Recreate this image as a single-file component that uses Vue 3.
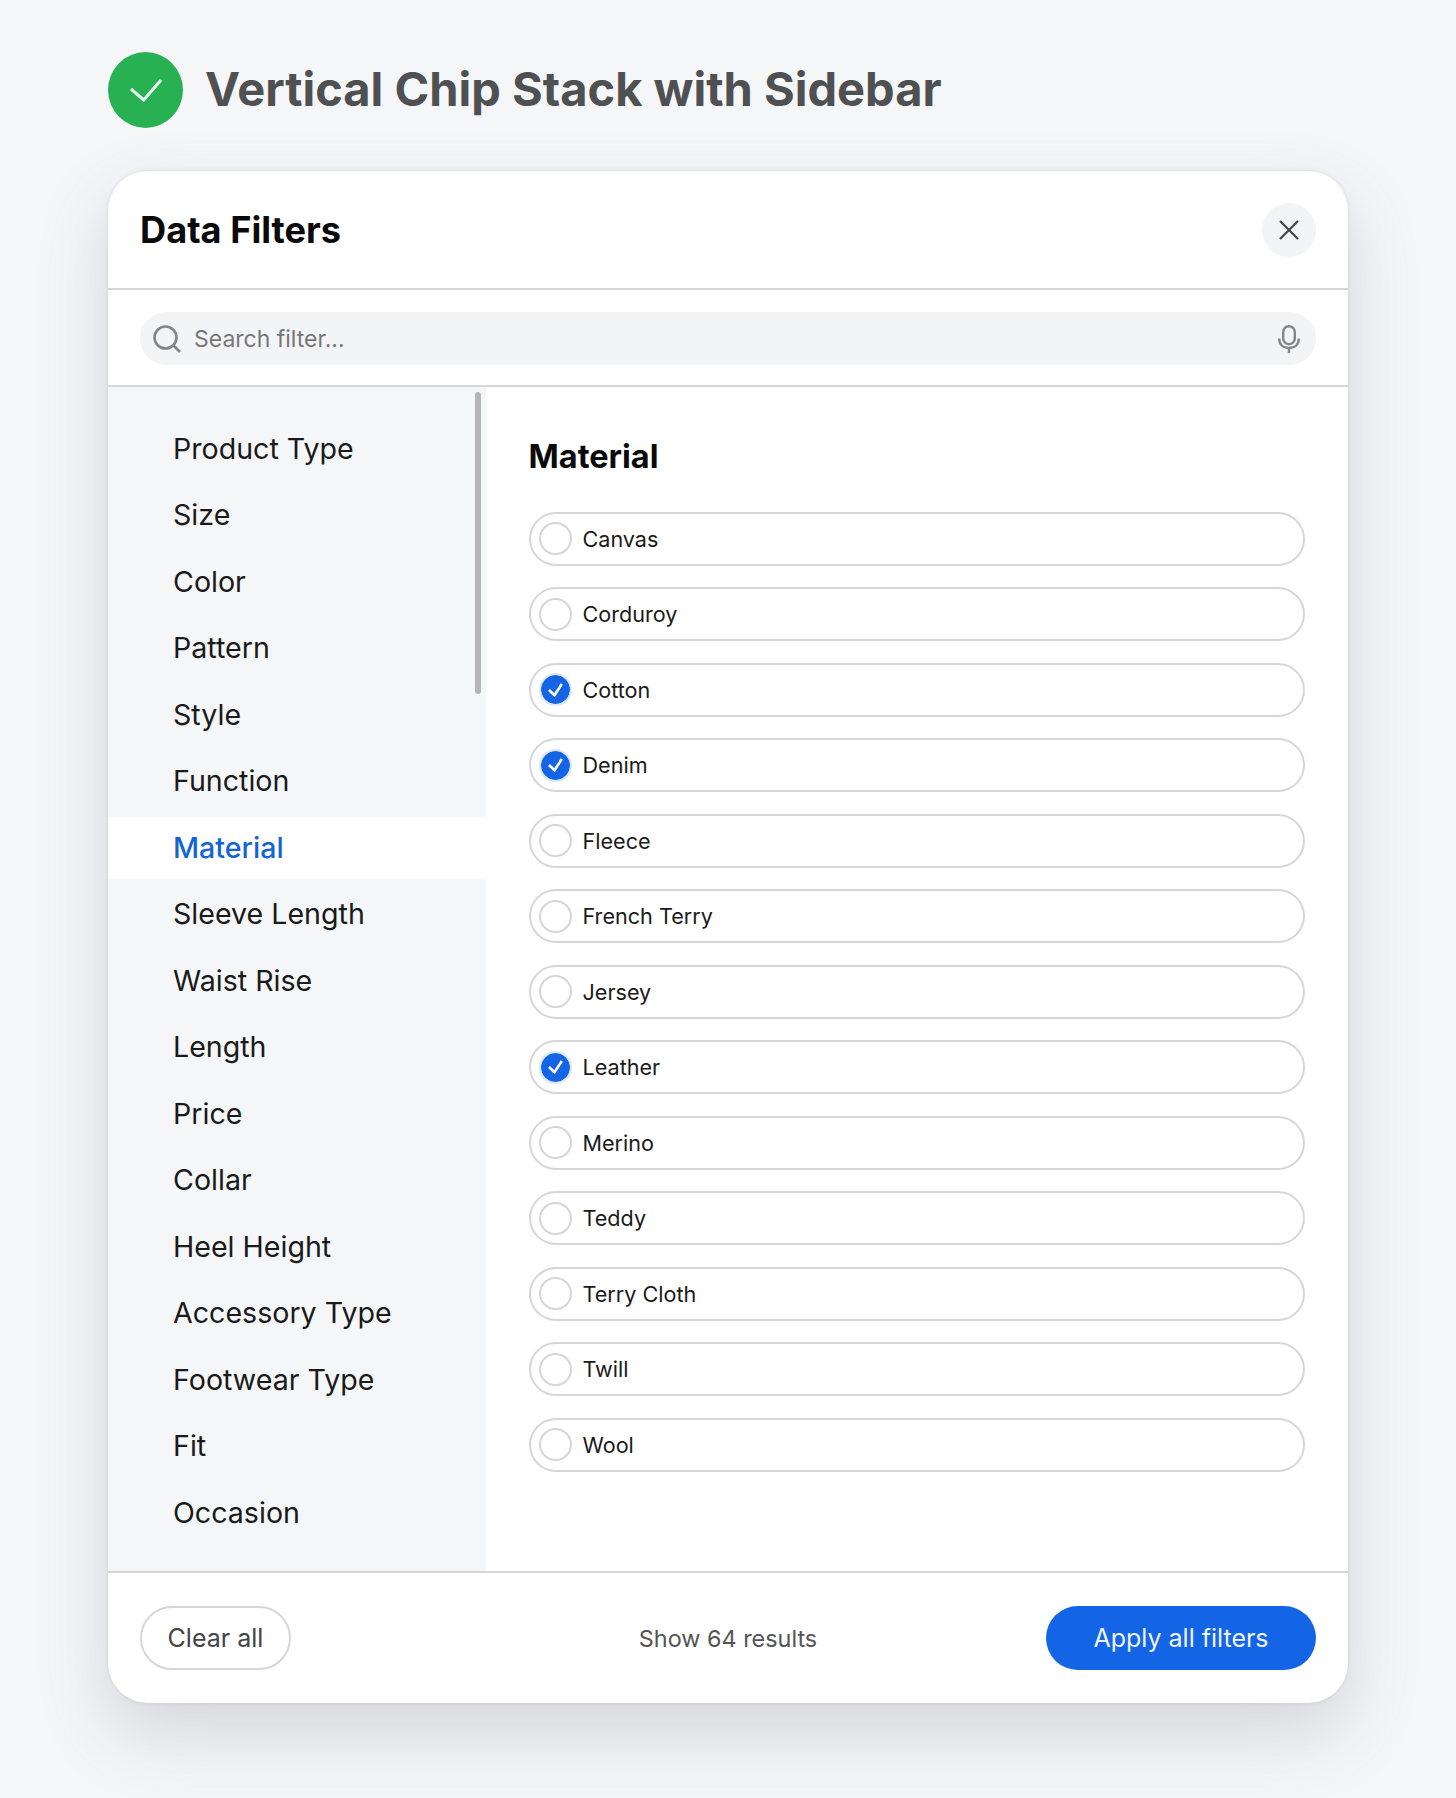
<script setup>
const categories = [
	'Product Type', 'Size', 'Color', 'Pattern', 'Style', 'Function', 'Material', 'Sleeve Length', 'Waist Rise',
	'Length', 'Price', 'Collar', 'Heel Height', 'Accessory Type', 'Footwear Type', 'Fit', 'Occasion'
];

const materials = [
	{ name: 'Canvas', checked: false },
	{ name: 'Corduroy', checked: false },
	{ name: 'Cotton', checked: true },
	{ name: 'Denim', checked: true },
	{ name: 'Fleece', checked: false },
	{ name: 'French Terry', checked: false },
	{ name: 'Jersey', checked: false },
	{ name: 'Leather', checked: true },
	{ name: 'Merino', checked: false },
	{ name: 'Teddy', checked: false },
	{ name: 'Terry Cloth', checked: false },
	{ name: 'Twill', checked: false },
	{ name: 'Wool', checked: false }
];
</script>

<template>
	<div class="page">
		<header class="page-head">
			<span class="status">
				<svg width="32" height="23" viewBox="0 0 32 23" fill="none">
					<path d="M1 10L13.7 21L31 1" stroke="#e9f8ee" stroke-width="3" />
				</svg>
			</span>
			<h1>Vertical Chip Stack with Sidebar</h1>
		</header>

		<section class="card">
			<div class="card-head">
				<h2>Data Filters</h2>
				<button class="close" aria-label="Close">
					<svg width="20" height="20" viewBox="0 0 20 20" fill="none">
						<path d="M1 1L19 19M19 1L1 19" stroke="#444" stroke-width="2.2" />
					</svg>
				</button>
			</div>

			<div class="search-row">
				<div class="search">
					<svg width="28" height="28" viewBox="0 0 28 28" fill="none">
						<circle cx="12.5" cy="12.5" r="11" stroke="#858585" stroke-width="2.6" />
						<path d="M20 20L27 27" stroke="#858585" stroke-width="2.6" />
					</svg>
					<span class="search-text">Search filter...</span>
					<svg class="mic" width="22" height="28" viewBox="0 0 22 28" fill="none">
						<rect x="5.2" y="1.2" width="11.6" height="18" rx="5.8" stroke="#858585" stroke-width="2.4" />
						<path d="M1.2 13.5C1.2 19.5 5 23 11 23C17 23 20.8 19.5 20.8 13.5M11 23V28" stroke="#858585" stroke-width="2.4" />
					</svg>
				</div>
			</div>

			<div class="card-body">
				<nav class="sidebar">
					<a
						v-for="item in categories"
						:key="item"
						class="side-item"
						:class="{ active: item === 'Material' }"
					>{{ item }}</a>
					<span class="scroll-thumb"></span>
				</nav>

				<div class="panel">
					<h3>Material</h3>
					<div class="chips">
						<label v-for="chip in materials" :key="chip.name" class="chip">
							<span class="tick" :class="{ on: chip.checked }">
								<svg v-if="chip.checked" width="15" height="14" viewBox="0 0 15 14" fill="none">
									<path d="M1 7L6.5 12.3L13.8 1" stroke="#fff" stroke-width="2.6" />
								</svg>
							</span>
							{{ chip.name }}
						</label>
					</div>
				</div>
			</div>

			<footer class="card-foot">
				<button class="btn-clear">Clear all</button>
				<span class="results">Show 64 results</span>
				<button class="btn-apply">Apply all filters</button>
			</footer>
		</section>
	</div>
</template>

<style>
html, body {
	background: #f5f6f8;
}
</style>

<style scoped>
.page {
	box-sizing: border-box;
	height: 1798px;
	padding: 52px 108px 0;
	font-family: Inter, "Liberation Sans", sans-serif;
	overflow: hidden;
}
.page-head {
	display: flex;
	align-items: center;
	gap: 22px;
	height: 76px;
	margin-bottom: 43px;
}
.status {
	flex: none;
	display: flex;
	align-items: center;
	justify-content: center;
	width: 75px;
	height: 76px;
	border-radius: 50%;
	background: #27b153;
}
h1 {
	margin: 0;
	padding-bottom: 3px;
	font-size: 47px;
	font-weight: 700;
	color: #4f5051;
}
.card {
	display: flex;
	flex-direction: column;
	width: 1240px;
	height: 1532px;
	border-radius: 40px;
	background: #fff;
	box-shadow: 0 30px 70px rgba(90, 100, 115, 0.22), 0 0 4px rgba(100, 100, 110, 0.14);
	overflow: hidden;
}
.card-head {
	flex: none;
	display: flex;
	align-items: center;
	justify-content: space-between;
	box-sizing: border-box;
	height: 119px;
	padding: 0 32px;
	border-bottom: 2px solid #d6d6d6;
}
h2 {
	margin: 0;
	font-size: 36.2px;
	font-weight: 700;
	color: #0a0a0a;
}
.close {
	display: flex;
	align-items: center;
	justify-content: center;
	width: 54px;
	height: 54px;
	padding: 0;
	border: 0;
	border-radius: 50%;
	background: #f3f4f6;
}
.search-row {
	flex: none;
	box-sizing: border-box;
	height: 97px;
	padding: 22px 32px 0;
	border-bottom: 2px solid #d6d6d6;
}
.search {
	display: flex;
	align-items: center;
	gap: 13px;
	height: 53px;
	padding: 0 12px 0 13px;
	border-radius: 27px;
	background: #f3f4f6;
}
.search-text {
	flex: 1;
	font-size: 23px;
	color: #777;
}
.mic {
	margin-right: 4px;
}
.card-body {
	flex: 1;
	display: flex;
	min-height: 0;
}
.sidebar {
	position: relative;
	flex: none;
	display: flex;
	flex-direction: column;
	gap: 4.5px;
	box-sizing: border-box;
	width: 378px;
	padding-top: 30.5px;
	background: #f5f6f8;
	overflow: hidden;
}
.side-item {
	flex: none;
	height: 62px;
	line-height: 62px;
	padding-left: 65px;
	font-size: 28.6px;
	color: #1a1a1a;
}
.side-item.active {
	background: #fff;
	color: #1464d6;
	font-weight: 500;
}
.scroll-thumb {
	position: absolute;
	top: 5px;
	right: 5px;
	width: 6px;
	height: 302px;
	border-radius: 3px;
	background: #b5b5b5;
}
.panel {
	flex: 1;
	padding: 43px 43px 0 42.5px;
}
h3 {
	margin: 0 0 27.5px;
	height: 54px;
	line-height: 54px;
	font-size: 32.5px;
	font-weight: 700;
	color: #0a0a0a;
}
.chips {
	display: flex;
	flex-direction: column;
	gap: 21.5px;
}
.chip {
	display: flex;
	align-items: center;
	gap: 11px;
	box-sizing: border-box;
	height: 54px;
	padding-left: 8px;
	border: 2px solid #d6d6d6;
	border-radius: 27px;
	font-size: 21.6px;
	color: #1a1a1a;
}
.tick {
	flex: none;
	display: flex;
	align-items: center;
	justify-content: center;
	box-sizing: border-box;
	width: 33px;
	height: 33px;
	border: 2px solid #d6d6d6;
	border-radius: 50%;
}
.tick.on {
	border: 2px solid #dbe7fb;
	background: #1464e6;
	background-clip: padding-box;
}
.card-foot {
	flex: none;
	display: grid;
	grid-template-columns: 1fr auto 1fr;
	align-items: center;
	box-sizing: border-box;
	height: 132px;
	padding: 0 32px;
	border-top: 2px solid #d6d6d6;
}
.btn-clear, .btn-apply {
	height: 64px;
	padding: 0;
	border-radius: 32px;
	font-family: inherit;
	font-size: 25px;
}
.btn-clear {
	justify-self: start;
	width: 151px;
	border: 2px solid #d6d6d6;
	background: #fff;
	color: #444;
}
.btn-apply {
	justify-self: end;
	width: 270px;
	border: 0;
	background: #1464e6;
	color: #eef4ff;
}
.results {
	font-size: 23.4px;
	color: #555;
}
</style>
